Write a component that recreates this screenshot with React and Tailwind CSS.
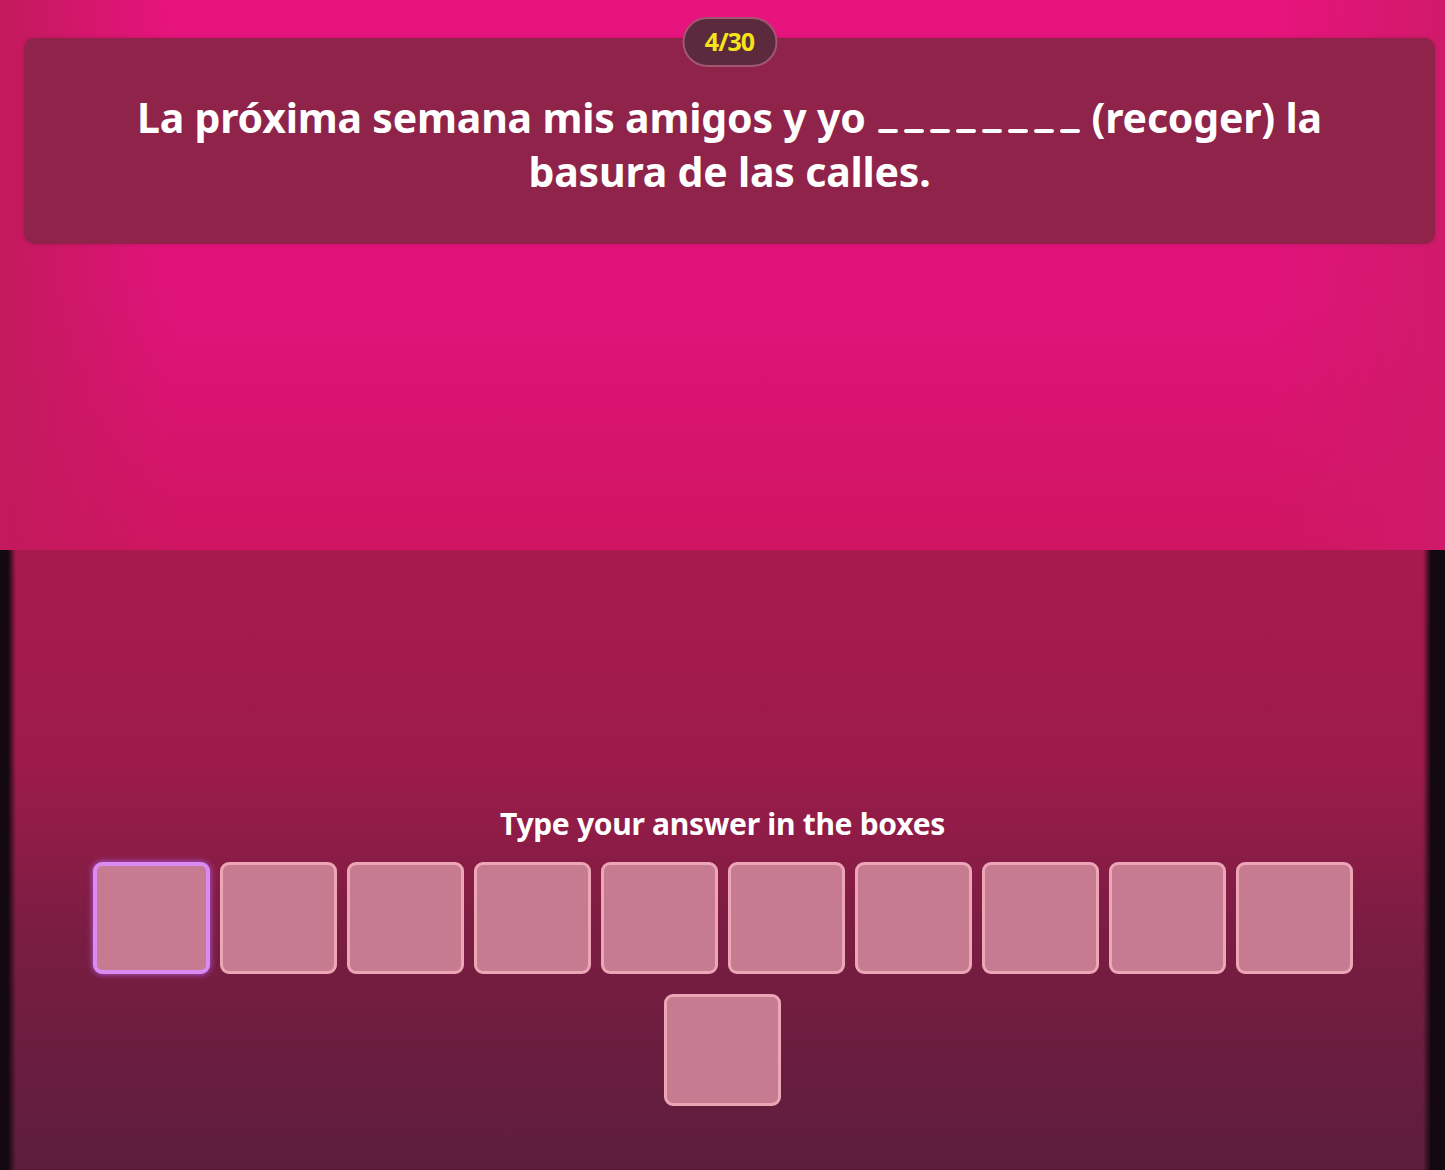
import React from 'react';

const ANSWER_LENGTH = 11;

const Blank = () => (
  <span className="inline-flex items-end gap-[6px] mx-[12px] h-[4px]">
    {Array.from({ length: 8 }, (_, i) => (
      <span key={i} className="block w-[20px] h-[4px] bg-white rounded-sm" />
    ))}
  </span>
);

const LetterBox = ({ active }) => (
  <div
    className={`w-[117px] h-[112px] rounded-[9px] bg-[#c67b90] ${
      active
        ? 'border-[4px] border-[#d98bf3] shadow-[0_0_6px_#b15fe0]'
        : 'border-[3px] border-[#eca6b6]'
    }`}
  />
);

const App = () => {
  return (
    <div
      className="w-full min-h-[1170px] flex flex-col overflow-hidden"
      style={{ fontFamily: '"Noto Sans", Lato, sans-serif' }}
    >
      {/* Question area */}
      <section className="h-[550px] pt-[38px] pl-[24px] pr-[10px] bg-[linear-gradient(to_right,#c21a5c_0%,transparent_12%,transparent_88%,#d01a6a_100%),linear-gradient(to_bottom,#e8137d_0%,#e0137a_55%,#cf1561_100%)]">
        <div className="relative rounded-[10px] bg-[#8f234a] pt-[52px] pb-[46px] px-[40px] shadow-[0_0_4px_rgba(0,0,0,0.15)]">
          <div className="absolute left-1/2 -translate-x-1/2 -top-[21px] w-[95px] h-[50px] rounded-full bg-[#5b2a3c] border-2 border-[#a2566f] flex items-center justify-center">
            <span className="text-[#f6e41a] text-[25px] font-bold tracking-[-1px]">4/30</span>
          </div>
          <p className="text-white text-center font-bold text-[41px] leading-[54px] tracking-[-0.2px]">
            La próxima semana mis amigos y yo
            <Blank />
            (recoger) la
            <br />
            basura de las calles.
          </p>
        </div>
      </section>

      {/* Answer area */}
      <section className="flex-1 flex flex-col items-center pt-[256px] pb-[60px] bg-[linear-gradient(to_right,#140810_0px,#140810_8px,transparent_16px,transparent_calc(100%-22px),#140810_calc(100%-14px),#140810_100%),linear-gradient(to_bottom,#a81a4d_0%,#9c1b4a_35%,#7a1d42_62%,#5c1e3c_100%)]">
        <h2 className="text-white font-bold text-[30px] leading-[36px] tracking-[-0.3px]">
          Type your answer in the boxes
        </h2>
        <div className="mt-[20px] w-[1260px] flex flex-wrap justify-center gap-x-[10px] gap-y-[20px]">
          {Array.from({ length: ANSWER_LENGTH }, (_, i) => (
            <LetterBox key={i} active={i === 0} />
          ))}
        </div>
      </section>
    </div>
  );
};

export default App;
